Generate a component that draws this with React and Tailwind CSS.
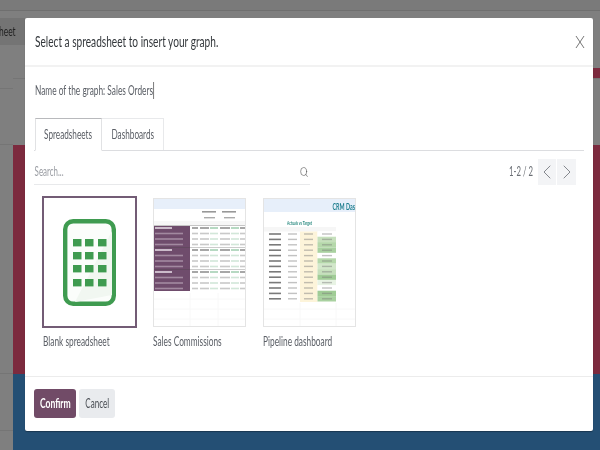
import React from 'react';
import { Search, ChevronLeft, ChevronRight } from 'lucide-react';

const commissionRows = [
  { y: 229, title: true }, { y: 234.5 }, { y: 240 }, { y: 245.5 },
  { y: 251, title: true }, { y: 256.5 }, { y: 262 }, { y: 267.5 },
  { y: 273, title: true }, { y: 278.5 }, { y: 284 }, { y: 289.5 },
];

const commissionCols = [
  [192, 6, '#777777'], [200, 9, '#777777'], [210, 8, '#8fc4a0'],
  [220, 10, '#777777'], [231, 8, '#8fc4a0'], [240, 6, '#777777'],
];

const pipelineRows = [
  ['#ffffff', 235], ['#c6e0bc', 240.4], ['#b5d8aa', 245.8], ['#a9d1a0', 251.2], ['#ffffff', 256.6],
  ['#b5d8aa', 262], ['#d2e7ca', 267.4], ['#c6e0bc', 272.8], ['#a0cc96', 278.2],
  ['#e8f3e4', 283.6], ['#ffffff', 289], ['#a0cc96', 294.4], ['#a9d1a0', 299.8],
];

function BlankIcon() {
  return (
    <svg width="53" height="87" viewBox="0 0 53 87">
      <rect x="2.2" y="2.2" width="48.6" height="82.6" rx="8" fill="#fbfdfb" stroke="#3f9b50" strokeWidth="4.4" />
      <path d="M49 12 L49 76 L12 83 Z" fill="#f1f7f1" />
      {[20, 33, 46, 60].map((y) =>
        [10, 22, 35].map((x) => <rect key={`${x}-${y}`} x={x} y={y} width="8.5" height="7.4" fill="#3f9b50" />)
      )}
    </svg>
  );
}

function CommissionsThumb() {
  return (
    <svg width="93" height="129" viewBox="153 199 93 129" className="block blur-[0.6px]">
      <rect x="153" y="199" width="93" height="129" fill="#ffffff" />
      <rect x="153" y="200" width="93" height="10" fill="#e7effa" />
      <rect x="153" y="222" width="93" height="5" fill="#f7f7f7" />
      <rect x="202" y="212" width="14" height="1.6" fill="#444444" opacity="0.55" />
      <rect x="222" y="212" width="14" height="1.6" fill="#444444" opacity="0.55" />
      <rect x="204" y="218" width="11" height="1.4" fill="#444444" opacity="0.45" />
      <rect x="224" y="218" width="11" height="1.4" fill="#444444" opacity="0.45" />
      <rect x="153" y="227" width="37" height="65" fill="#6f4c6c" />
      {commissionRows.map((row) => (
        <g key={row.y}>
          <rect x="155" y={row.y - 0.8} width={row.title ? 17 : 28} height="1.6" fill="#efe5ef" opacity={row.title ? 0.9 : 0.4} />
          {row.title && <rect x="153" y={row.y - 2.8} width="93" height="0.6" fill="#444444" opacity="0.45" />}
          {commissionCols.map(([x, w, color]) => (
            <rect key={x} x={x} y={row.y - 0.8} width={w} height="1.6" fill={color} opacity={row.title ? 0.8 : 0.4} />
          ))}
        </g>
      ))}
      <path d="M153 300H246M153 310H246M153 320H246M190 294V328M218 294V328" stroke="#f8f8f8" strokeWidth="1" />
      <rect x="153.5" y="199.5" width="92" height="128" fill="none" stroke="#e4e4e4" />
    </svg>
  );
}

function PipelineThumb() {
  return (
    <svg width="93" height="129" viewBox="263 199 93 129" className="block blur-[0.6px]">
      <rect x="263" y="199" width="93" height="129" fill="#ffffff" />
      <rect x="263" y="200" width="93" height="13" fill="#e7effa" />
      <text x="332.5" y="211" fontSize="8.5" fontWeight="700" fill="#1f7f8f" fontFamily="Lato, sans-serif" textLength="22.5" lengthAdjust="spacingAndGlyphs">CRM Das</text>
      <text x="287" y="226" fontSize="5.5" fontWeight="700" fill="#2a8a80" fontFamily="Lato, sans-serif" textLength="25" lengthAdjust="spacingAndGlyphs">Actuals vs Target</text>
      <rect x="263" y="228" width="73" height="4.5" fill="#f6f6f6" />
      <rect x="300" y="232.5" width="17.5" height="70.5" fill="#fdf4da" />
      {pipelineRows.map(([fill, y]) => (
        <g key={y}>
          <rect x="317.5" y={y - 2.7} width="18.5" height="5.4" fill={fill} />
          <rect x="269" y={y - 0.8} width="12" height="1.6" fill="#222222" opacity="0.6" />
          <rect x="288" y={y - 0.7} width="9" height="1.4" fill="#777777" opacity="0.45" />
          <rect x="304" y={y - 0.7} width="9" height="1.4" fill="#777777" opacity="0.45" />
          <rect x="322" y={y - 0.7} width="10" height="1.4" fill="#777777" opacity="0.45" />
        </g>
      ))}
      <path d="M263 310H356M263 320H356M300 304V328M336 304V328" stroke="#f8f8f8" strokeWidth="1" />
      <rect x="263.5" y="199.5" width="92" height="128" fill="none" stroke="#e4e4e4" />
    </svg>
  );
}

function Card({ label, width, frame, children }) {
  return (
    <div className={`${width} flex flex-col`}>
      <div className={frame}>{children}</div>
      <span className="mt-[5px] inline-block origin-left scale-x-[0.64] text-[13px] leading-[16px] text-[#5c6067] whitespace-nowrap">{label}</span>
    </div>
  );
}

export default function App() {
  return (
    <div className="relative w-[600px] h-[450px] overflow-hidden bg-[#7f7f7f] font-['Lato',sans-serif] blur-[0.3px]">
      {/* page behind the dialog */}
      <div className="h-[11px] bg-[#7a7a7a] border-b border-[#6f6f6f]" />
      <div className="flex h-[439px]">
        <div className="w-[13px] flex flex-col">
          <div className="h-[78px] border-b border-[#757575]" />
          <div className="h-[56px] border-b border-[#757575]" />
          <div className="h-[229px] border-b border-[#757575]" />
          <div className="h-[57px] border-b border-[#757575]" />
        </div>
        <div className="flex-1 flex flex-col">
          <div className="h-[57px]" />
          <div className="h-[10px] w-[300px] self-end bg-[#7c2a3e]" />
          <div className="h-[67px] border-t border-[#757575]" />
          <div className="h-[229px] bg-[#7c2a3e]" />
          <div className="flex-1 bg-[#244f74]" />
        </div>
      </div>
      <div className="absolute left-0 top-[18px] h-[27px] w-[25px] bg-[#747474] flex items-center justify-end pr-[9px] overflow-hidden">
        <span className="inline-block origin-right scale-x-[0.65] text-[13px] text-[#222222]">heet</span>
      </div>

      {/* dialog */}
      <div className="absolute left-[25px] top-[18px] w-[568px] h-[413px] bg-white rounded-[2px] shadow-[0_1px_1px_rgba(0,0,0,0.3)] flex flex-col">
        <div className="h-[49px] shrink-0 flex items-center justify-between pl-[10px] pr-[8px] border-b-2 border-[#f2f2f2]">
          <h2 className="inline-block origin-left scale-x-[0.675] text-[15px] text-[#33373b] whitespace-nowrap">Select a spreadsheet to insert your graph.</h2>
          <svg width="10" height="14" viewBox="0 0 10 14" className="shrink-0">
            <path d="M1 1L9 13M9 1L1 13" fill="none" stroke="#777777" strokeWidth="1" />
          </svg>
        </div>
        <div className="flex-1 pt-[15px] px-[9px] flex flex-col">
          <div className="h-[17px] pl-px text-[13px] leading-[17px] text-[#5c6067]">
            <span className="inline-block origin-left scale-x-[0.64] whitespace-nowrap border-r border-[#333333]">Name of the graph: Sales Orders</span>
          </div>
          <div className="mt-[19px] h-[33px] w-[550px] pl-px flex border-b border-[#dcdde0] text-[13px] text-[#5c6067]">
            <div className="w-[67px] h-[33px] flex items-center justify-center bg-white border border-b-white border-[#e1e2e4] border-t-[#b8b9bc]">
              <span className="shrink-0 scale-x-[0.63] whitespace-nowrap">Spreadsheets</span>
            </div>
            <div className="w-[62px] h-[32px] flex items-center justify-center border border-l-0 border-b-0 border-[#e8e9eb]">
              <span className="shrink-0 scale-x-[0.63] whitespace-nowrap">Dashboards</span>
            </div>
          </div>
          <div className="mt-[8px] flex items-start justify-between w-[542px]">
            <div className="w-[276px] h-[26px] flex items-center justify-between border-b border-[#e8e9eb]">
              <span className="pl-px origin-left scale-x-[0.61] text-[13px] text-[#9a9da3]">Search...</span>
              <Search size={12} strokeWidth={1.4} className="text-[#555555] scale-x-[0.75]" />
            </div>
            <div className="flex items-center">
              <span className="origin-right scale-x-[0.6] text-[13px] text-[#6b6f75] mr-[5px]">1-2 / 2</span>
              <div className="flex gap-px">
                <div className="w-[18px] h-[26px] flex items-center justify-center bg-[#f3f4f6]">
                  <ChevronLeft size={24} strokeWidth={1} className="shrink-0 text-[#85888e]" />
                </div>
                <div className="w-[19px] h-[26px] flex items-center justify-center bg-[#f3f4f6]">
                  <ChevronRight size={24} strokeWidth={1} className="shrink-0 text-[#85888e]" />
                </div>
              </div>
            </div>
          </div>
          <div className="mt-[11px] ml-[8px] flex gap-[16px]">
            <Card label="Blank spreadsheet" width="w-[95px] pl-px" frame="-ml-px h-[132px] flex items-center justify-center border-2 border-[#735c75]"><BlankIcon /></Card>
            <Card label="Sales Commissions" width="w-[94px]" frame="h-[132px] pt-[2px]"><CommissionsThumb /></Card>
            <Card label="Pipeline dashboard" width="w-[94px]" frame="h-[132px] pt-[2px]"><PipelineThumb /></Card>
          </div>
        </div>
        <div className="h-[55px] shrink-0 border-t border-[#ececec] pt-[12px] pl-[9px] flex items-start gap-[3px] text-[13px]">
          <button className="w-[42px] h-[29px] rounded-[3px] bg-[#714b67] text-white font-bold flex items-center justify-center">
            <span className="shrink-0 scale-x-[0.66]">Confirm</span>
          </button>
          <button className="w-[36px] h-[29px] rounded-[3px] bg-[#e9ebee] text-[#4a4e54] flex items-center justify-center">
            <span className="shrink-0 scale-x-[0.62]">Cancel</span>
          </button>
        </div>
      </div>
    </div>
  );
}
